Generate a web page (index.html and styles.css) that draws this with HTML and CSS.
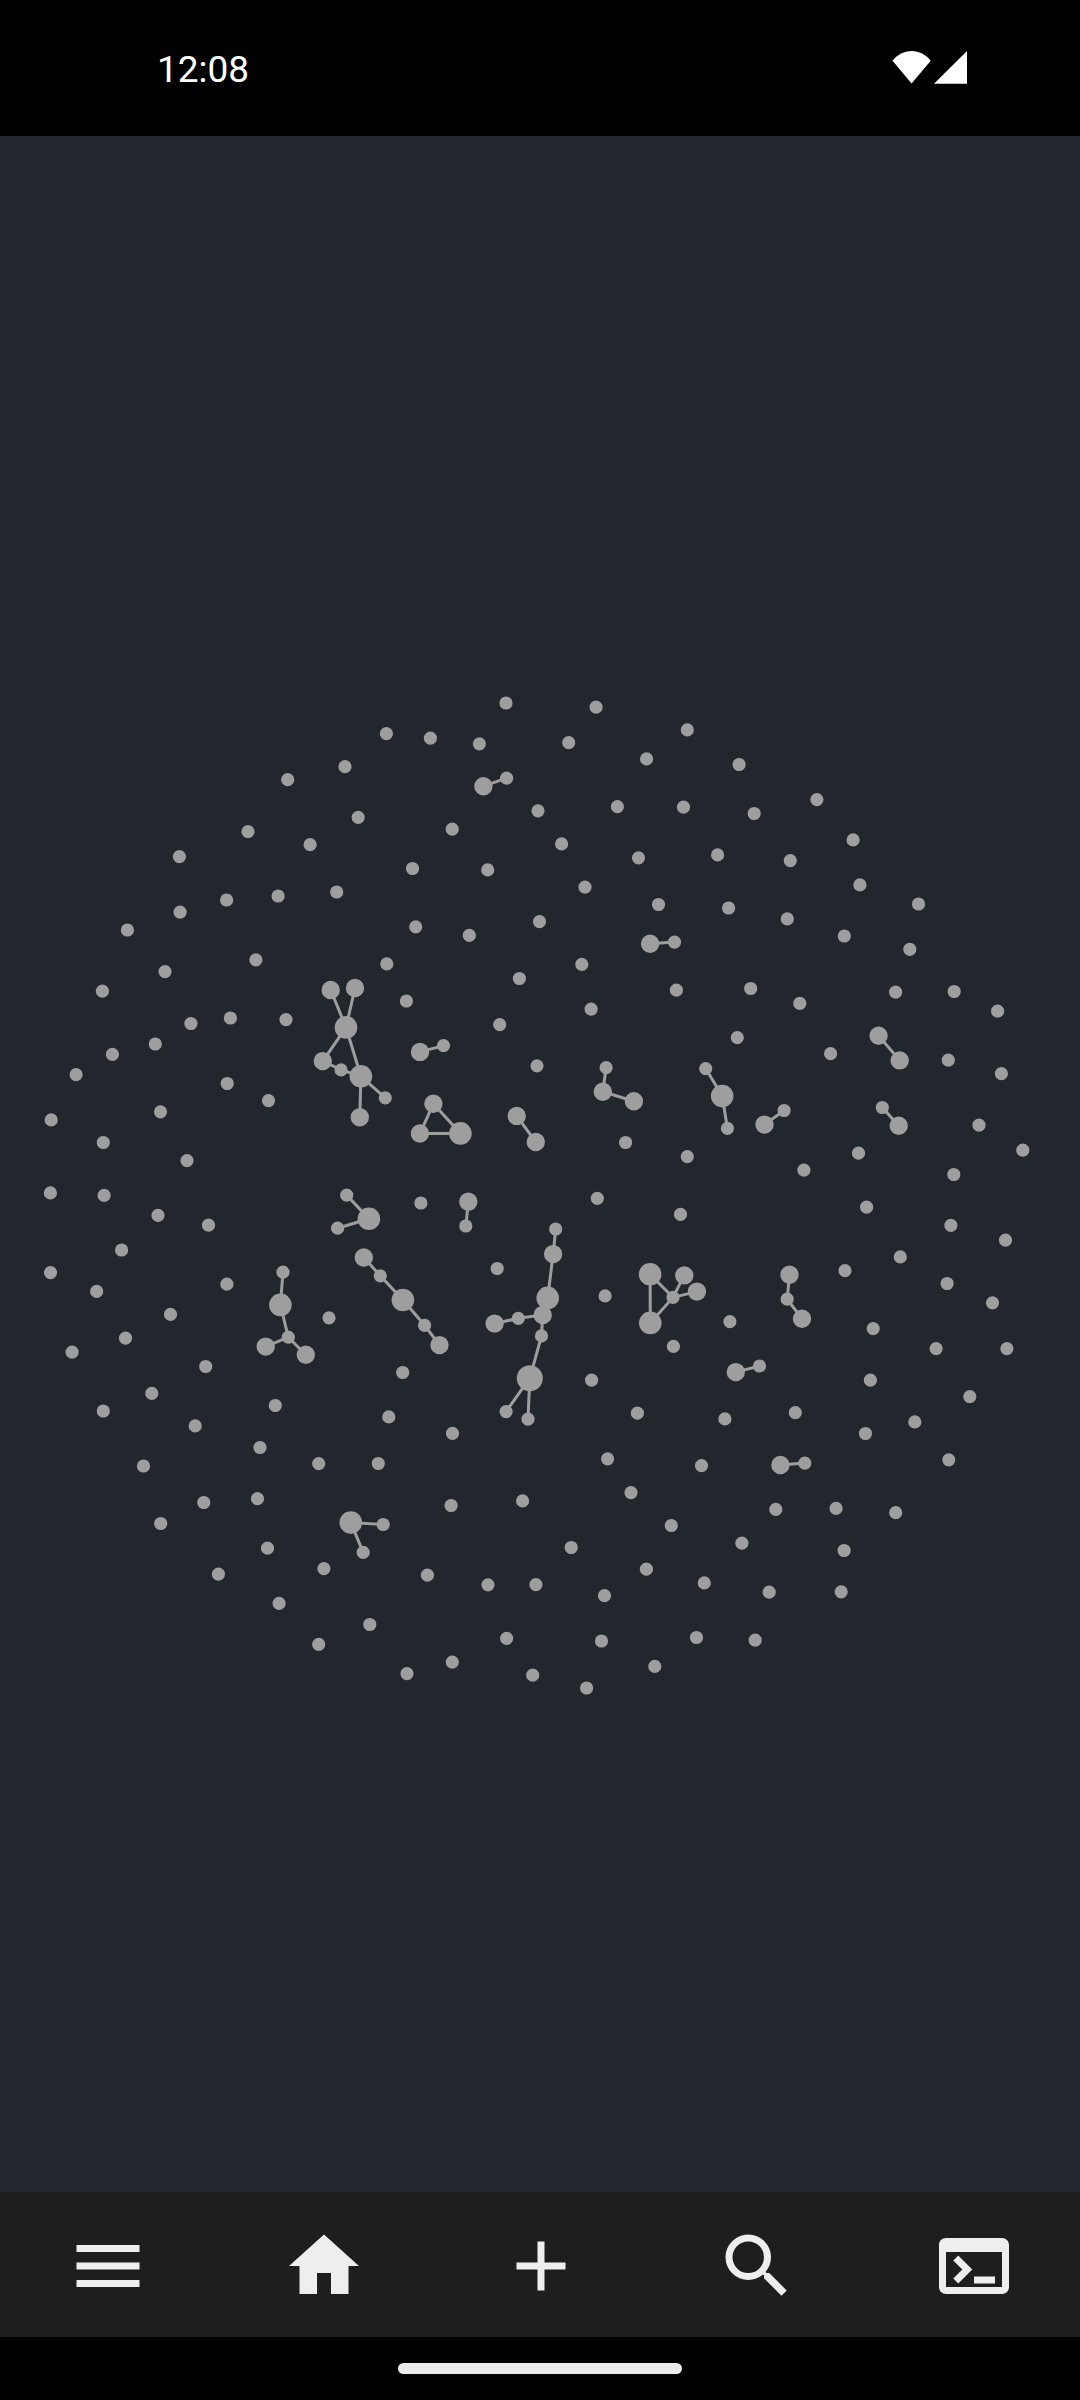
FILE: index.html
```html
<!DOCTYPE html>
<html lang="en">
<head>
<meta charset="utf-8">
<title>Graph view</title>
<link rel="stylesheet" href="styles.css">
</head>
<body>
<div class="screen">
  <header class="status-bar">
    <span class="clock">12:08</span>
    <svg class="signals" width="76" height="34" viewBox="892 50 76 34" aria-hidden="true">
      <path d="M911.6 83.6L892.5 60.8C897.5 54.4 904.3 51 911.6 51S925.800 54.400 930.700 60.800Z"/>
      <path d="M934 83.700H967V51Z"/>
    </svg>
  </header>

  <main class="graph">
    <svg class="graph-canvas" viewBox="0 136 1080 2056" aria-label="Note graph">
      <path class="links" d="
        M506.6 778.2L483.400 786.200 M650.100 943.800L674.500 942.100
        M330.700 990L346 1027.400L355 988 M322.800 1061.100L346 1027.400L360.900 1076.300 M322.800 1061.100L341.100 1069.900L360.900 1076.300L385.300 1097.800 M360.900 1076.300L359.800 1117.200
        M420 1051.900L443.500 1045.600 M433.400 1103.800L419.900 1133.500H460.400Z
        M516.700 1115.900L535.800 1142 M606.100 1067.700L602.800 1091.800L633.900 1101.300
        M705.700 1068.600L722.200 1096.100L727.400 1128.300 M764.500 1124.600L784.100 1110.500
        M878.600 1035.700L899.700 1060.400 M882.300 1107.500L898.700 1125.700
        M346.700 1195.100L368.900 1218.700L337.600 1228.200 M468.300 1201.800L465.800 1226
        M363.800 1257.500L380.300 1275.800L402.900 1300L424.600 1325.300L439.500 1345.100
        M283 1272.200L280.400 1304.900L288.300 1337.200L265.700 1346.600 M288.300 1337.200L305.800 1354.800
        M555.700 1229L553.100 1254.100L547.700 1297.900L542.700 1314.900L518.300 1318.300L494.600 1323.600
        M542.700 1314.900L541.500 1335.900L529.800 1378.200L506.100 1411.600 M529.800 1378.200L528 1419.100
        M673 1297.400L650.100 1274.300L650.300 1322.900L673 1297.400L684.300 1275.400 M673 1297.400L696.900 1291.600
        M789.500 1274.800L787.200 1299.200L802 1318.700 M735.800 1372.100L759.500 1366
        M780.400 1465L804.800 1463.100 M383.200 1524.500L350.800 1522.600L363.200 1552.400"/>

      <path class="node node-s" d="
        M345 766.700h0M287.700 779.700h0M358.200 817.300h0M248 831.700h0M310.100 844.700h0M179.400 856.600h0
        M336.700 892h0M278.100 896h0M226.600 900h0M180.100 912.200h0M127.400 930h0M255.900 959.800h0
        M165 971.600h0M102.400 991.100h0M230.400 1018h0M286 1019.600h0M190.900 1023.500h0M155.300 1044h0
        M506 703h0M596.100 707.100h0M386.400 733.700h0M430.400 738.100h0M479.400 743.800h0M568.700 742.700h0
        M687.300 729.900h0M646.600 758.900h0M506.600 778.200h0M538 810.800h0M617.400 806.700h0M683.500 807.100h0
        M452.200 829.200h0M561.600 843.900h0M717.600 854.900h0M638.500 857.800h0M412.500 868.500h0M487.700 869.900h0
        M585 887.100h0M658.500 904.500h0M539.500 921.600h0M415.700 926.800h0M469.300 935.400h0M674.500 942.100h0
        M386.800 963.900h0M581.800 964.300h0M519.400 978.500h0M676.400 990.200h0M406.400 1001h0M591.100 1009.100h0
        M499.700 1024.700h0M739.100 764.500h0M816.900 799.600h0M754.200 813.500h0M853.100 839.900h0M790.300 860.600h0
        M859.900 884.900h0M918.500 904h0M728.600 908h0M787.300 918.900h0M844.300 936h0M909.800 949.300h0
        M750.700 988.500h0M799.800 1003.400h0M895.600 992.100h0M954.200 991.500h0M997.600 1011.200h0M737.300 1037.600h0
        M112.400 1054.300h0M76.100 1074.600h0M227.200 1083.500h0M268.500 1100.600h0M160.500 1111.800h0M51.200 1119.900h0
        M103.300 1142.500h0M187 1160.600h0M50.400 1192.900h0M104.100 1195.400h0M158 1215.400h0M208.500 1225.200h0
        M121.600 1250h0M50.500 1272.600h0M96.700 1291.400h0M226.900 1284.200h0M170.500 1314.400h0M125.500 1338.200h0
        M72.100 1352.100h0M205.700 1366.500h0M151.800 1393.400h0M329 1317.800h0M283 1272.200h0M288.300 1337.200h0
        M341.100 1069.900h0M385.300 1097.800h0M346.700 1195.100h0M337.600 1228.200h0M443.500 1045.600h0M537 1065.800h0
        M606.100 1067.700h0M705.700 1068.600h0M727.400 1128.300h0M625.600 1142.500h0M687.300 1156.700h0M420.900 1203h0
        M465.800 1226h0M597.300 1198.400h0M680.500 1214.400h0M555.700 1229h0M518.300 1318.300h0M541.500 1335.900h0
        M506.100 1411.600h0M528 1419.100h0M497.200 1268.500h0M605.100 1295.900h0M673 1297.400h0M673.400 1346.400h0
        M591.600 1380.100h0M380.300 1275.800h0M424.600 1325.300h0M402.700 1372.500h0M830.600 1053.700h0M948.300 1060.100h0
        M1001.400 1073.700h0M784.100 1110.500h0M882.300 1107.500h0M979 1125.100h0M858.500 1153.200h0M1022.800 1150.200h0
        M803.900 1170.100h0M953.800 1174.500h0M866.600 1207.200h0M950.900 1225.300h0M1005.500 1240.100h0M900.300 1256.900h0
        M845 1270.700h0M947.100 1283.500h0M992.500 1302.800h0M787.200 1299.200h0M729.900 1321.600h0M873.200 1328.600h0
        M936.100 1348.600h0M1006.900 1348.600h0M759.500 1366h0M870.400 1380.200h0M969.800 1396.600h0M103.300 1411h0
        M275.300 1405.500h0M195.200 1425.900h0M260 1447.500h0M318.700 1463.600h0M143.500 1466h0M257.500 1498.700h0
        M203.800 1502.500h0M160.700 1523.500h0M267.500 1548.200h0M218.400 1574.100h0M323.900 1568.600h0M279.100 1603.300h0
        M318.700 1644.300h0M388.800 1416.900h0M637.400 1413.200h0M452.500 1433.300h0M378.300 1463.500h0M607.600 1458.800h0
        M701.500 1465.600h0M522.600 1500.900h0M451.100 1505.500h0M631 1492.600h0M383.200 1524.500h0M363.200 1552.400h0
        M671.300 1525.500h0M571.200 1547.500h0M646.400 1569.200h0M427.400 1575.200h0M488 1584.800h0M535.900 1584.600h0
        M604.500 1595.700h0M704.300 1582.900h0M369.800 1624.500h0M506.600 1638.300h0M601.500 1641h0M696.500 1637.500h0
        M452.300 1662.100h0M654.800 1666.400h0M407 1673.600h0M532.700 1675.200h0M586.600 1688h0M724.900 1418.900h0
        M795.300 1412.700h0M914.800 1421.900h0M865.500 1433.500h0M804.800 1463.100h0M948.800 1459.800h0M775.800 1509.400h0
        M836.100 1508.400h0M895.700 1512.700h0M741.900 1543.200h0M844.100 1550.500h0M769.200 1592.200h0M841.200 1591.800h0
        M755.200 1640.200h0"/>

      <path class="node node-m" d="
        M330.700 990h0M355 988h0M483.400 786.200h0M650.100 943.800h0M878.600 1035.700h0M265.700 1346.600h0
        M305.800 1354.800h0M322.800 1061.100h0M359.800 1117.200h0M420 1051.900h0M602.800 1091.800h0M633.900 1101.300h0
        M433.400 1103.800h0M419.900 1133.500h0M516.700 1115.900h0M535.800 1142h0M468.300 1201.800h0M553.100 1254.100h0
        M542.700 1314.900h0M494.600 1323.600h0M684.300 1275.400h0M696.900 1291.600h0M363.800 1257.500h0M439.500 1345.100h0
        M899.700 1060.400h0M764.500 1124.600h0M898.700 1125.700h0M789.500 1274.800h0M802 1318.700h0M735.800 1372.100h0
        M780.400 1465h0"/>

      <path class="node node-l" d="
        M346 1027.400h0M360.900 1076.300h0M280.400 1304.900h0M368.900 1218.700h0M722.200 1096.100h0M460.400 1133.400h0
        M547.700 1297.900h0M650.100 1274.300h0M650.300 1322.900h0M402.900 1300h0M350.800 1522.600h0"/>

      <path class="node node-xl" d="M529.800 1378.200h0"/>
    </svg>
  </main>

  <nav class="toolbar">
    <button class="tool" aria-label="Menu">
      <svg class="icon" viewBox="0 0 24 24"><path d="M3 6H21V8H3V6M3 11H21V13H3V11M3 16H21V18H3V16Z"/></svg>
    </button>
    <button class="tool" aria-label="Home">
      <svg class="icon" viewBox="0 0 24 24"><path d="M10 20V14H14V20H19V12H22L12 3L2 12H5V20H10Z"/></svg>
    </button>
    <button class="tool" aria-label="New note">
      <svg class="icon" viewBox="0 0 24 24"><path d="M19 13H13V19H11V13H5V11H11V5H13V11H19V13Z"/></svg>
    </button>
    <button class="tool" aria-label="Search">
      <svg class="icon" viewBox="0 0 24 24"><path d="M15.500 14H14.710L14.430 13.730C15.410 12.590 16 11.110 16 9.500A6.500 6.500 0 1 0 9.500 16C11.110 16 12.590 15.410 13.730 14.430L14 14.710V15.500L19 20.490L20.490 19L15.500 14M9.500 14A4.500 4.500 0 1 1 9.500 5A4.500 4.500 0 0 1 9.500 14Z"/></svg>
    </button>
    <button class="tool" aria-label="Commands">
      <svg class="icon" viewBox="0 0 24 24"><path d="M20 4H4C2.890 4 2 4.900 2 6V18C2 19.100 2.890 20 4 20H20C21.100 20 22 19.100 22 18V6C22 4.900 21.110 4 20 4M20 18H4V8H20V18M18 17H12V15H18V17M7.500 17L6.090 15.590L8.670 13L6.080 10.410L7.500 9L11.500 13L7.500 17Z"/></svg>
    </button>
  </nav>

  <footer class="gesture-bar"><span class="handle"></span></footer>
</div>
</body>
</html>
```

FILE: styles.css
```css
* {
  box-sizing: border-box;
}

body {
  margin: 0;
  background: #000;
  font-family: Roboto, "Liberation Sans", sans-serif;
}

.screen {
  display: flex;
  flex-direction: column;
  width: 1080px;
  height: 2400px;
}

.status-bar {
  display: flex;
  flex: 0 0 136px;
  justify-content: space-between;
  align-items: flex-start;
  padding: 50px 112px 0 157px;
  background: #000;
}

.clock {
  color: #fff;
  font-size: 37px;
  line-height: 40px;
}

.signals {
  display: block;
  fill: #fff;
}

.graph {
  flex: 1;
  min-height: 0;
  background: #22272e;
}

.graph-canvas {
  display: block;
  width: 100%;
  height: 100%;
}

.links {
  fill: none;
  stroke: #9e9e9e;
  stroke-width: 3;
}

.node {
  fill: none;
  stroke: #9e9e9e;
  stroke-linecap: round;
}

.node-s {
  stroke-width: 13.2px;
}

.node-m {
  stroke-width: 18.4px;
}

.node-l {
  stroke-width: 22.6px;
}

.node-xl {
  stroke-width: 26px;
}

.toolbar {
  display: flex;
  flex: 0 0 145px;
  justify-content: space-between;
  align-items: flex-start;
  padding: 32px 64.5px 0 65.5px;
  background: #1e1e1e;
}

.tool {
  padding: 0;
  border: 0;
  background: none;
}

.icon {
  display: block;
  width: 84px;
  height: 84px;
  fill: #eee;
}

.gesture-bar {
  display: flex;
  flex: 0 0 63px;
  justify-content: center;
  align-items: flex-start;
  padding-top: 26px;
  background: #000;
}

.handle {
  width: 284px;
  height: 11px;
  border-radius: 6px;
  background: #ebebeb;
}
```
